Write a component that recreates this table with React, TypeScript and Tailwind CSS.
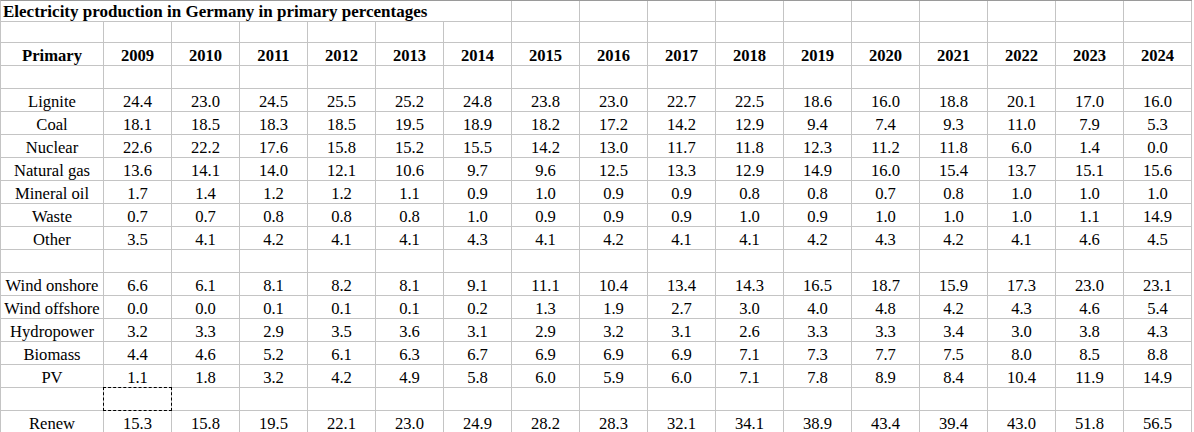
import React from 'react';

const years = [2009, 2010, 2011, 2012, 2013, 2014, 2015, 2016, 2017, 2018, 2019, 2020, 2021, 2022, 2023, 2024];

// null = blank spacer row
const rows: ([string, string[]] | null)[] = [
  null,
  ['Lignite', ['24.4', '23.0', '24.5', '25.5', '25.2', '24.8', '23.8', '23.0', '22.7', '22.5', '18.6', '16.0', '18.8', '20.1', '17.0', '16.0']],
  ['Coal', ['18.1', '18.5', '18.3', '18.5', '19.5', '18.9', '18.2', '17.2', '14.2', '12.9', '9.4', '7.4', '9.3', '11.0', '7.9', '5.3']],
  ['Nuclear', ['22.6', '22.2', '17.6', '15.8', '15.2', '15.5', '14.2', '13.0', '11.7', '11.8', '12.3', '11.2', '11.8', '6.0', '1.4', '0.0']],
  ['Natural gas', ['13.6', '14.1', '14.0', '12.1', '10.6', '9.7', '9.6', '12.5', '13.3', '12.9', '14.9', '16.0', '15.4', '13.7', '15.1', '15.6']],
  ['Mineral oil', ['1.7', '1.4', '1.2', '1.2', '1.1', '0.9', '1.0', '0.9', '0.9', '0.8', '0.8', '0.7', '0.8', '1.0', '1.0', '1.0']],
  ['Waste', ['0.7', '0.7', '0.8', '0.8', '0.8', '1.0', '0.9', '0.9', '0.9', '1.0', '0.9', '1.0', '1.0', '1.0', '1.1', '14.9']],
  ['Other', ['3.5', '4.1', '4.2', '4.1', '4.1', '4.3', '4.1', '4.2', '4.1', '4.1', '4.2', '4.3', '4.2', '4.1', '4.6', '4.5']],
  null,
  ['Wind onshore', ['6.6', '6.1', '8.1', '8.2', '8.1', '9.1', '11.1', '10.4', '13.4', '14.3', '16.5', '18.7', '15.9', '17.3', '23.0', '23.1']],
  ['Wind offshore', ['0.0', '0.0', '0.1', '0.1', '0.1', '0.2', '1.3', '1.9', '2.7', '3.0', '4.0', '4.8', '4.2', '4.3', '4.6', '5.4']],
  ['Hydropower', ['3.2', '3.3', '2.9', '3.5', '3.6', '3.1', '2.9', '3.2', '3.1', '2.6', '3.3', '3.3', '3.4', '3.0', '3.8', '4.3']],
  ['Biomass', ['4.4', '4.6', '5.2', '6.1', '6.3', '6.7', '6.9', '6.9', '6.9', '7.1', '7.3', '7.7', '7.5', '8.0', '8.5', '8.8']],
  ['PV', ['1.1', '1.8', '3.2', '4.2', '4.9', '5.8', '6.0', '5.9', '6.0', '7.1', '7.8', '8.9', '8.4', '10.4', '11.9', '14.9']],
  null,
  ['Renew', ['15.3', '15.8', '19.5', '22.1', '23.0', '24.9', '28.2', '28.3', '32.1', '34.1', '38.9', '43.4', '39.4', '43.0', '51.8', '56.5']],
];

const cell = 'flex items-end justify-center border-r border-b border-[#c4c4c4] leading-[18px] whitespace-nowrap overflow-visible';

export default function App() {
  return (
    <div
      className="w-[1194px] h-[432px] overflow-hidden bg-white text-black text-[16.6px]"
      style={{ fontFamily: '"Liberation Serif", "Times New Roman", serif' }}
    >
      <div className="grid grid-cols-[103px_repeat(16,68px)] auto-rows-[23px] grid-rows-[21px_21px] border-l border-t border-l-[#c4c4c4] border-t-[#9a9a9a] w-max">
        {/* title row, text runs over the first seven cells */}
        <div className={`${cell} col-span-7 !justify-start pl-[2px] font-bold text-[17px]`}>
          Electricity production in Germany in primary percentages
        </div>
        {years.slice(6).map((y) => (
          <div key={`t${y}`} className={cell} />
        ))}

        {/* empty row */}
        <div className={cell} />
        {years.map((y) => (
          <div key={`e${y}`} className={cell} />
        ))}

        {/* header */}
        <div className={`${cell} font-bold`}>Primary</div>
        {years.map((y) => (
          <div key={`h${y}`} className={`${cell} font-bold`}>{y}</div>
        ))}

        {rows.map((r, i) =>
          r === null ? (
            <React.Fragment key={`b${i}`}>
              <div className={cell} />
              {years.map((y, j) => (
                <div key={`b${i}-${y}`} className={`${cell} relative`}>
                  {i === 14 && j === 0 && (
                    <div className="absolute -left-px -top-px -right-px -bottom-px border border-dashed border-black" />
                  )}
                </div>
              ))}
            </React.Fragment>
          ) : (
            <React.Fragment key={r[0]}>
              <div className={cell}>{r[0]}</div>
              {r[1].map((v, j) => (
                <div key={`${r[0]}-${j}`} className={cell}>{v}</div>
              ))}
            </React.Fragment>
          )
        )}
      </div>
    </div>
  );
}
